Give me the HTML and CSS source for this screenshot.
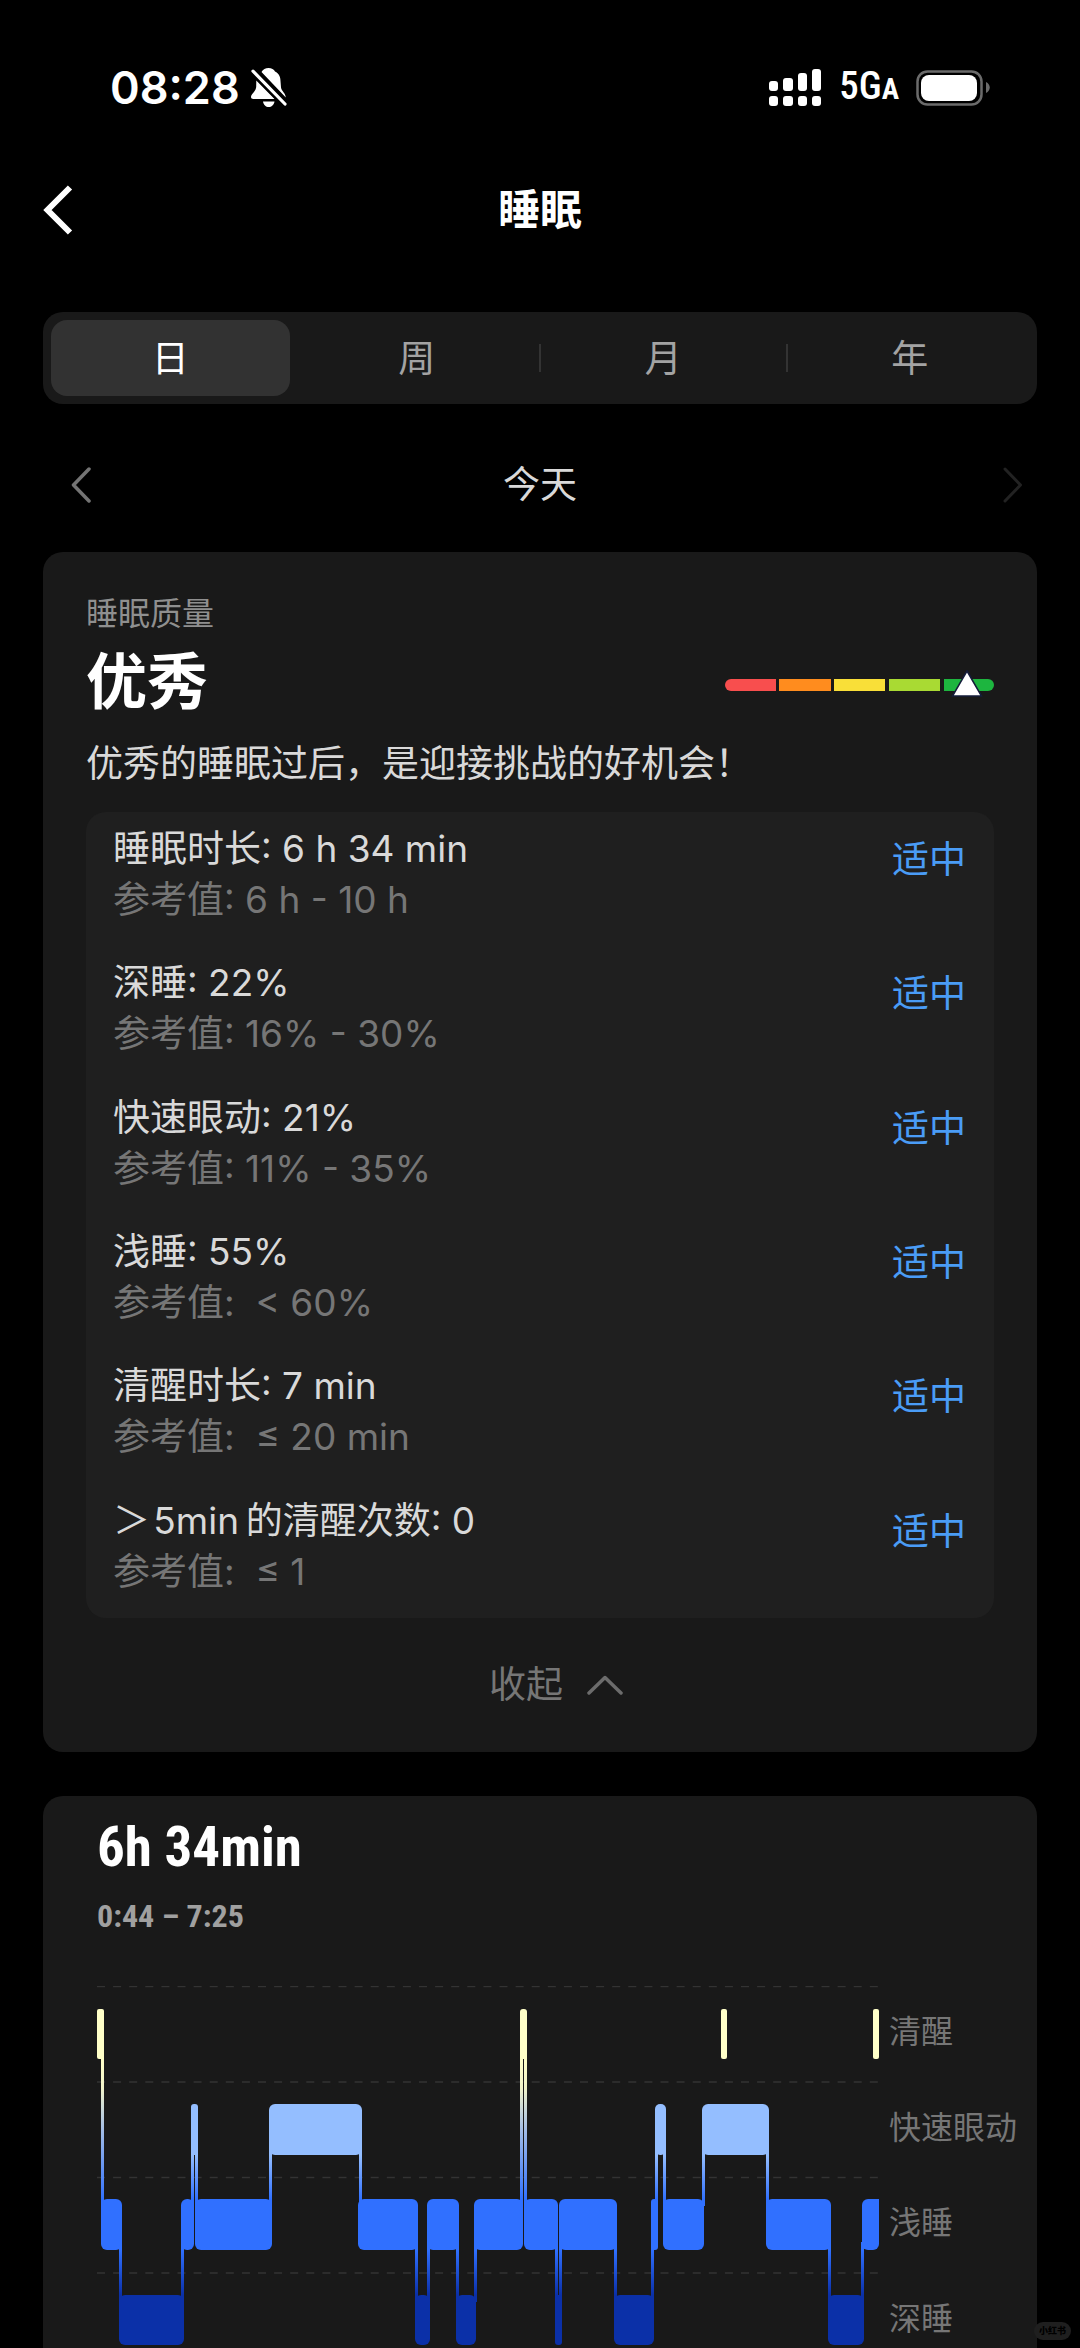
FILE: index.html
```html
<!DOCTYPE html>
<html lang="zh-CN">
<head>
<meta charset="utf-8">
<meta name="viewport" content="width=device-width, initial-scale=1">
<title>睡眠</title>
<link rel="stylesheet" href="styles.css">
</head>
<body>
<div class="app">
  <div class="status">
    <div class="status-side">
      <span class="clock">08:28</span>
      <svg class="bell" width="36" height="40" viewBox="0 0 36 40" aria-hidden="true">
        <path fill="#fff" d="M10.500 4C12 1.500 14.500 0 17.500 0C20.500 0 23 1.500 24 3.500C28 5.500 29.500 9 29.500 13L30 19.500C30.500 23 34.500 25 34.800 29.500ZM5.300 12.500L23.500 31H2.500C.8 31 0 30 0 29C0 26 4.800 23.500 5.200 19ZM12 33.500H23.500C23 37 20.500 39 17.700 39C15 39 12.500 37 12 33.500Z"/>
        <path stroke="#000" stroke-width="7" d="M2 3.200L34 36"/>
        <path stroke="#fff" stroke-width="3.200" stroke-linecap="round" d="M2 3.200L34 36"/>
      </svg>
    </div>
    <div class="status-side">
      <svg width="53" height="37" viewBox="0 0 53 37" fill="#fff" aria-hidden="true">
        <rect x="0" y="12" width="9" height="10" rx="3"/><rect x="14" y="9" width="10" height="13" rx="3"/><rect x="29" y="4" width="9" height="18" rx="3"/><rect x="43" y="0" width="9" height="22" rx="3"/>
        <rect x="0" y="27" width="9" height="10" rx="3"/><rect x="14" y="27" width="10" height="10" rx="3"/><rect x="29" y="27" width="9" height="10" rx="3"/><rect x="43" y="27" width="9" height="10" rx="3"/>
      </svg>
      <span class="network">5G<small>A</small></span>
      <svg width="74" height="36" viewBox="0 0 74 36" aria-hidden="true">
        <rect x="1.500" y="1.500" width="64" height="33" rx="10" fill="none" stroke="#6b6b6b" stroke-width="2.500"/>
        <rect x="5" y="5" width="56" height="26" rx="8" fill="#fff"/>
        <path d="M70 12C75 14.500 75 20.500 70 23Z" fill="#6b6b6b"/>
      </svg>
    </div>
  </div>

  <header class="header">
    <button class="icon-btn" aria-label="返回">
      <svg width="30" height="50" viewBox="0 0 30 50"><path d="M27 2.500L4.500 25L27 47.500" fill="none" stroke="#fff" stroke-width="6"/></svg>
    </button>
    <h1 class="title">睡眠</h1>
  </header>

  <main class="content">
    <nav class="tabs">
      <button class="tab tab-active">日</button>
      <button class="tab">周</button>
      <button class="tab tab-divided">月</button>
      <button class="tab tab-divided">年</button>
    </nav>

    <div class="date-nav">
      <button class="icon-btn" aria-label="前一天">
        <svg width="20" height="36" viewBox="0 0 20 36"><path d="M18 2L2.500 18L18 34" fill="none" stroke="#747474" stroke-width="3.500" stroke-linecap="round" stroke-linejoin="round"/></svg>
      </button>
      <span class="date">今天</span>
      <button class="icon-btn next" aria-label="后一天" disabled>
        <svg width="20" height="36" viewBox="0 0 20 36"><path d="M2 2L17.500 18L2 34" fill="none" stroke="#222" stroke-width="3" stroke-linecap="round" stroke-linejoin="round"/></svg>
      </button>
    </div>

    <section class="card quality">
      <p class="label">睡眠质量</p>
      <div class="score">
        <h2 class="grade">优秀</h2>
        <svg class="scale" width="269" height="28" viewBox="0 0 269 28" aria-hidden="true">
          <path d="M6 9H51V21H6A6 6 0 0 1 6 9Z" fill="#f84e4e"/>
          <rect x="54" y="9" width="52" height="12" fill="#ff8c1e"/>
          <rect x="109" y="9" width="51" height="12" fill="#f9df38"/>
          <rect x="164" y="9" width="51" height="12" fill="#a9da33"/>
          <path d="M219 9H263A6 6 0 0 1 263 21H219Z" fill="#1db53f"/>
          <path d="M242 1L256.500 26H227.500Z" fill="#fff" stroke="#141c3a" stroke-width="1.500"/>
        </svg>
      </div>
      <p class="message">优秀的睡眠过后，是迎接挑战的好机会！</p>
      <ul class="metrics">
        <li class="metric"><div><p>睡眠时长: 6 h 34 min</p><p class="ref">参考值: 6 h - 10 h</p></div><span class="verdict">适中</span></li>
        <li class="metric"><div><p>深睡: 22%</p><p class="ref">参考值: 16% - 30%</p></div><span class="verdict">适中</span></li>
        <li class="metric"><div><p>快速眼动: 21%</p><p class="ref">参考值: 11% - 35%</p></div><span class="verdict">适中</span></li>
        <li class="metric"><div><p>浅睡: 55%</p><p class="ref">参考值:&nbsp; &lt; 60%</p></div><span class="verdict">适中</span></li>
        <li class="metric"><div><p>清醒时长: 7 min</p><p class="ref">参考值:&nbsp; ≤ 20 min</p></div><span class="verdict">适中</span></li>
        <li class="metric"><div><p>＞&hairsp;5min&thinsp;的清醒次数: 0</p><p class="ref">参考值:&nbsp; ≤ 1</p></div><span class="verdict">适中</span></li>
      </ul>
      <button class="collapse">收起
        <svg width="36" height="20" viewBox="0 0 36 20" aria-hidden="true"><path d="M2 18L18 2.500L34 18" fill="none" stroke="#6c6c6c" stroke-width="3.500" stroke-linecap="round" stroke-linejoin="round"/></svg>
      </button>
    </section>

    <section class="card stages">
      <h2 class="duration">6h 34min</h2>
      <p class="period">0:44 – 7:25</p>
      <div class="chart">
        <svg class="plot" viewBox="0 0 782 382" role="img" aria-label="睡眠阶段">
          <defs>
            <linearGradient id="awake-light" gradientUnits="userSpaceOnUse" x1="0" y1="74" x2="0" y2="214"><stop offset="0" stop-color="#ffffc8"/><stop offset=".2" stop-color="#f1f3ca"/><stop offset=".5" stop-color="#a3bde6"/><stop offset="1" stop-color="#3070ff"/></linearGradient>
            <linearGradient id="rem-light" gradientUnits="userSpaceOnUse" x1="0" y1="169" x2="0" y2="214"><stop offset="0" stop-color="#94beff"/><stop offset="1" stop-color="#3070ff"/></linearGradient>
            <linearGradient id="light-deep" gradientUnits="userSpaceOnUse" x1="0" y1="264" x2="0" y2="309"><stop offset="0" stop-color="#3070ff"/><stop offset="1" stop-color="#0b30a8"/></linearGradient>
          </defs>
          <path d="M0 .5H782M0 96H782M0 191.500H782M0 287H782" stroke="#333" stroke-width="1.500" stroke-dasharray="8 8.100"/>
          <g fill="#ffffc8">
            <rect x="0" y="23" width="7" height="50" rx="2"/><rect x="423" y="23" width="7" height="50" rx="3"/><rect x="624" y="23" width="6" height="50" rx="2"/><rect x="776" y="23" width="6" height="50" rx="2"/>
          </g>
          <g fill="#94beff">
            <rect x="94" y="118" width="7" height="51" rx="3"/><rect x="172" y="118" width="93" height="51" rx="6"/><rect x="558" y="118" width="11" height="51" rx="5"/><rect x="605" y="118" width="67" height="51" rx="6"/>
          </g>
          <g fill="#3070ff">
            <rect x="4" y="213" width="21" height="51" rx="6"/><rect x="84" y="213" width="13" height="51" rx="6"/><rect x="98" y="213" width="77" height="51" rx="6"/><rect x="261" y="213" width="60" height="51" rx="6"/><rect x="330" y="213" width="32" height="51" rx="6"/><rect x="377" y="213" width="49" height="51" rx="6"/><rect x="427" y="213" width="34" height="51" rx="6"/><rect x="462" y="213" width="58" height="51" rx="6"/><rect x="554" y="213" width="7" height="51" rx="3"/><rect x="566" y="213" width="41" height="51" rx="6"/><rect x="669" y="213" width="65" height="51" rx="6"/><rect x="765" y="213" width="17" height="51" rx="6"/><rect x="776" y="213" width="6" height="25"/>
          </g>
          <g fill="#0b30a8">
            <rect x="22" y="309" width="65" height="50" rx="6"/><rect x="318" y="309" width="15" height="50" rx="6"/><rect x="359" y="309" width="20" height="50" rx="6"/><rect x="458" y="309" width="7" height="50" rx="3"/><rect x="517" y="309" width="40" height="50" rx="6"/><rect x="731" y="309" width="36" height="50" rx="6"/>
          </g>
          <path fill="url(#awake-light)" d="M4 66h3v154h-3zM423 66h3v154h-3zM427 66h3v154h-3z"/>
          <path fill="url(#rem-light)" d="M94 160h3v60h-3zM98 160h3v60h-3zM172 160h3v60h-3zM262 160h3v60h-3zM558 160h3v60h-3zM566 160h3v60h-3zM605 160h3v60h-3zM669 160h3v60h-3z"/>
          <path fill="url(#light-deep)" d="M22 256h3v60h-3zM84 256h3v60h-3zM318 256h3v60h-3zM330 256h3v60h-3zM359 256h3v60h-3zM377 256h3v60h-3zM458 256h3v60h-3zM462 256h3v60h-3zM517 256h3v60h-3zM554 256h3v60h-3zM731 256h3v60h-3zM764 256h3v60h-3z"/>
        </svg>
        <ul class="legend">
          <li>清醒</li>
          <li>快速眼动</li>
          <li>浅睡</li>
          <li>深睡</li>
        </ul>
      </div>
    </section>
  </main>
  <span class="watermark">小红书</span>
</div>
</body>
</html>
```
FILE: styles.css
```css
* {
  box-sizing: border-box;
  margin: 0;
  padding: 0;
}

body {
  background: #000;
  color: #d9d9d9;
  font-family: Inter, "Noto Sans CJK SC", sans-serif;
  font-size: 37px;
  line-height: 50px;
}

button {
  border: 0;
  background: none;
  color: inherit;
  font: inherit;
}

ul {
  list-style: none;
}

svg {
  display: block;
}

.app {
  position: relative;
  display: flex;
  flex-direction: column;
  height: 100vh;
}

.status {
  flex: none;
  display: flex;
  justify-content: space-between;
  align-items: center;
  height: 175px;
  padding: 0 90px 0 110px;
  color: #fff;
}

.status-side {
  display: flex;
  align-items: center;
}

.clock {
  font-size: 45px;
  font-weight: 600;
}

.bell {
  margin-left: 11px;
}

.network {
  margin: 0 17px;
  font-family: "Roboto Condensed", "Liberation Sans Narrow", Roboto, sans-serif;
  font-size: 39px;
  font-weight: 500;
}

.network small {
  font-size: 29px;
  font-weight: 700;
}

.header {
  flex: none;
  display: grid;
  grid-template-columns: 1fr auto 1fr;
  align-items: center;
  height: 70px;
  padding: 0 43px;
}

.icon-btn {
  justify-self: start;
}

.title {
  color: #fff;
  font-size: 42px;
  font-weight: 700;
}

.content {
  flex: 1;
  min-height: 0;
  padding: 67px 43px 0;
  overflow-y: auto;
  scrollbar-width: none;
}

.tabs {
  display: grid;
  grid-template-columns: repeat(4, 1fr);
  gap: 8px;
  padding: 8px;
  border-radius: 20px;
  background: #191919;
}

.tab {
  position: relative;
  height: 76px;
  padding-top: 2px;
  border-radius: 16px;
  color: #a3a3a3;
}

.tab-active {
  background: #323232;
  color: #fff;
}

.tab-divided::before {
  content: "";
  position: absolute;
  top: 24px;
  left: -5px;
  width: 2px;
  height: 28px;
  background: #333;
}

.date-nav {
  display: grid;
  grid-template-columns: 1fr auto 1fr;
  align-items: center;
  height: 134px;
  margin-top: 14px;
  padding: 0 14px 0 28px;
}

.date {
  padding-right: 14px;
}

.next {
  justify-self: end;
}

.card {
  border-radius: 20px;
  background: #191919;
}

.quality {
  padding: 40px 43px 0;
}

.label {
  color: #8f8f8f;
  font-size: 32px;
  line-height: 44px;
}

.score {
  display: flex;
  justify-content: space-between;
  align-items: center;
}

.grade {
  color: #fff;
  font-size: 61px;
  font-weight: 700;
  line-height: 92px;
}

.scale {
  margin-top: 4px;
}

.message {
  line-height: 72px;
}

.metrics {
  display: grid;
  grid-auto-rows: 1fr;
  min-height: 806px;
  margin-top: 12px;
  border-radius: 20px;
  background: #1f1f1f;
}

.metric {
  display: flex;
  justify-content: space-between;
  align-items: flex-start;
  padding: 11px 28px 0 27px;
}

.metric p {
  line-height: 51px;
}

.metric .ref {
  color: #767676;
}

.verdict {
  color: #4a9cf6;
  line-height: 74px;
}

.collapse {
  display: flex;
  justify-content: center;
  align-items: center;
  gap: 24px;
  width: 100%;
  height: 134px;
  padding-left: 32px;
  color: #767676;
}

.stages {
  margin-top: 44px;
  padding: 16px 18px 43px 54px;
}

.duration,
.period {
  font-family: "Roboto Condensed", "Liberation Sans Narrow", Roboto, sans-serif;
  font-weight: 700;
}

.duration {
  color: #fff;
  font-size: 55px;
  line-height: 70px;
}

.period {
  color: #a0a0a0;
  font-size: 32px;
  line-height: 68px;
}

.chart {
  display: grid;
  grid-template-columns: 1fr 130px;
  gap: 10px;
  margin-top: 36px;
}

.plot {
  width: 100%;
}

.legend {
  display: grid;
  grid-template-rows: repeat(4, 1fr);
  align-items: center;
  color: #767676;
  font-size: 32px;
  white-space: nowrap;
}

.legend li {
  padding-bottom: 3px;
}

.watermark {
  position: absolute;
  right: 9px;
  bottom: 8px;
  padding: 0 5px;
  border-radius: 9px;
  background: #1f1f1f;
  color: #000;
  font-size: 9px;
  font-weight: 900;
  line-height: 18px;
}
```
